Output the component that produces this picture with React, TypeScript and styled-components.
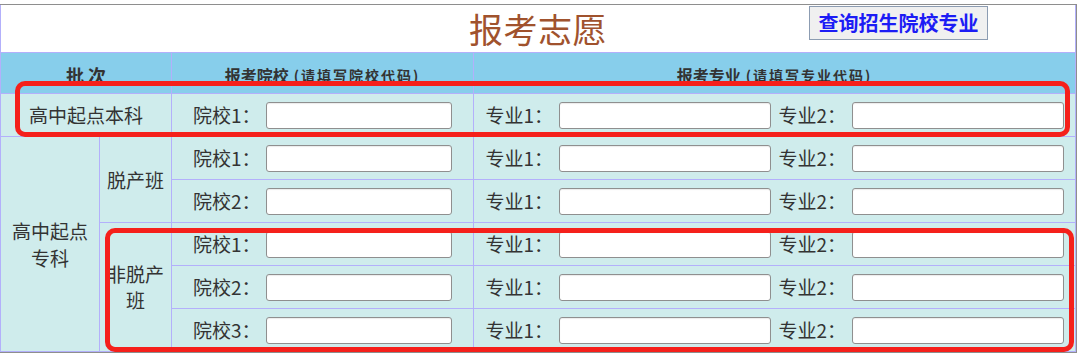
import React from "react";
import styled, { createGlobalStyle } from "styled-components";

const GlobalStyle = createGlobalStyle`
  html, body { margin: 0; padding: 0; background: #ffffff; }
  body { font-family: "Noto Sans CJK SC", "Noto Sans", sans-serif; color: #333; }
  * { box-sizing: border-box; }
`;

const LINE = "#b3b0fb";

const Page = styled.div`
  position: relative;
  width: 1080px;
  height: 359px;
  padding-top: 4px;
  overflow: hidden;
`;

const Frame = styled.div`
  width: 1077px;
  border-top: 1px solid #8e8e8e;
  border-right: 1px solid #8e8e8e;
  border-bottom: 1px solid #8e8e8e;
`;

const Grid = styled.div`
  display: grid;
  grid-template-columns: 98px 71px 301px 601px;
  grid-template-rows: 47px 40px repeat(6, 42px);
  gap: 1px;
  background: ${LINE};
  border-left: 1px solid ${LINE};
  border-right: 1px solid ${LINE};
  border-bottom: 1px solid ${LINE};
`;

const TitleBar = styled.div`
  grid-column: 1 / -1;
  grid-row: 1;
  background: #ffffff;
  display: grid;
  grid-template-columns: 1fr auto 1fr;
  align-items: center;
`;

const Title = styled.h1`
  grid-column: 2;
  margin: 0;
  font-size: 34px;
  font-weight: 400;
  line-height: 46px;
  color: #a0522d;
  letter-spacing: 0.5px;
`;

const QueryButton = styled.button`
  grid-column: 3;
  justify-self: end;
  align-self: start;
  margin: 1px 87px 0 0;
  width: 179px;
  height: 34px;
  padding: 0;
  background: #f0f0f0;
  border: 1px solid #8c9cb2;
  font-family: inherit;
  font-size: 20px;
  font-weight: 700;
  color: #1c1cf5;
  line-height: 30px;
  cursor: pointer;
`;

const HeadCell = styled.div<{ $col: string; $size?: number }>`
  grid-column: ${(p) => p.$col};
  grid-row: 2;
  background: #87ceeb;
  display: flex;
  align-items: center;
  justify-content: center;
  padding-top: 3px;
  font-weight: 700;
  font-size: ${(p) => p.$size ?? 16}px;
  color: #333;
  white-space: nowrap;
`;

const HeadNote = styled.span`
  font-size: 14px;
  letter-spacing: 2px;
  margin-left: 5px;
`;

const Cell = styled.div<{ $col: string; $row: string; $lh?: number }>`
  grid-column: ${(p) => p.$col};
  grid-row: ${(p) => p.$row};
  background: #cfecec;
  display: flex;
  align-items: center;
  justify-content: center;
  text-align: center;
  font-size: 19px;
  line-height: ${(p) => p.$lh ?? 26}px;
  color: #333;
`;

const Fields = styled.div`
  display: flex;
  align-items: center;
  gap: 8px;
`;

const Field = styled.label`
  display: flex;
  align-items: center;
`;

const FieldLabel = styled.span`
  width: 73px;
  flex-shrink: 0;
  text-align: left;
  font-size: 19px;
  white-space: nowrap;
  color: #333;
`;

const TextInput = styled.input<{ $w: number }>`
  width: ${(p) => p.$w}px;
  height: 27px;
  margin: 0;
  padding: 0 4px;
  background: #ffffff;
  border: 1px solid #8f8f8f;
  border-radius: 3px;
  box-shadow: inset 0 1px 1px rgba(0, 0, 0, 0.08);
  font-family: inherit;
  font-size: 15px;
  outline: none;
`;

const Mark = styled.div<{ $l: number; $t: number; $w: number; $h: number }>`
  position: absolute;
  left: ${(p) => p.$l}px;
  top: ${(p) => p.$t}px;
  width: ${(p) => p.$w}px;
  height: ${(p) => p.$h}px;
  border: 5px solid #f5201b;
  border-radius: 10px;
  pointer-events: none;
`;

type Row = { grid: number; school: number };

const rows: Row[] = [
  { grid: 3, school: 1 },
  { grid: 4, school: 1 },
  { grid: 5, school: 2 },
  { grid: 6, school: 1 },
  { grid: 7, school: 2 },
  { grid: 8, school: 3 },
];

export default function App() {
  return (
    <>
      <GlobalStyle />
      <Page>
        <Frame>
          <Grid>
            <TitleBar>
              <Title>报考志愿</Title>
              <QueryButton type="button">查询招生院校专业</QueryButton>
            </TitleBar>

            <HeadCell $col="1 / 3" $size={18}>批&nbsp;次</HeadCell>
            <HeadCell $col="3">
              报考院校<HeadNote>(请填写院校代码)</HeadNote>
            </HeadCell>
            <HeadCell $col="4">
              报考专业<HeadNote>(请填写专业代码)</HeadNote>
            </HeadCell>

            <Cell $col="1 / 3" $row="3">高中起点本科</Cell>
            <Cell $col="1" $row="4 / 9" $lh={27}>
              高中起点
              <br />
              专科
            </Cell>
            <Cell $col="2" $row="4 / 6">脱产班</Cell>
            <Cell $col="2" $row="6 / 9">非脱产班</Cell>

            {rows.map((r) => (
              <React.Fragment key={r.grid}>
                <Cell $col="3" $row={String(r.grid)}>
                  <Field>
                    <FieldLabel>院校{r.school}：</FieldLabel>
                    <TextInput $w={186} type="text" />
                  </Field>
                </Cell>
                <Cell $col="4" $row={String(r.grid)}>
                  <Fields>
                    <Field>
                      <FieldLabel>专业1：</FieldLabel>
                      <TextInput $w={212} type="text" />
                    </Field>
                    <Field>
                      <FieldLabel>专业2：</FieldLabel>
                      <TextInput $w={212} type="text" />
                    </Field>
                  </Fields>
                </Cell>
              </React.Fragment>
            ))}
          </Grid>
        </Frame>
        <Mark $l={15} $t={81} $w={1055} $h={56} />
        <Mark $l={105} $t={228} $w={969} $h={124} />
      </Page>
    </>
  );
}
